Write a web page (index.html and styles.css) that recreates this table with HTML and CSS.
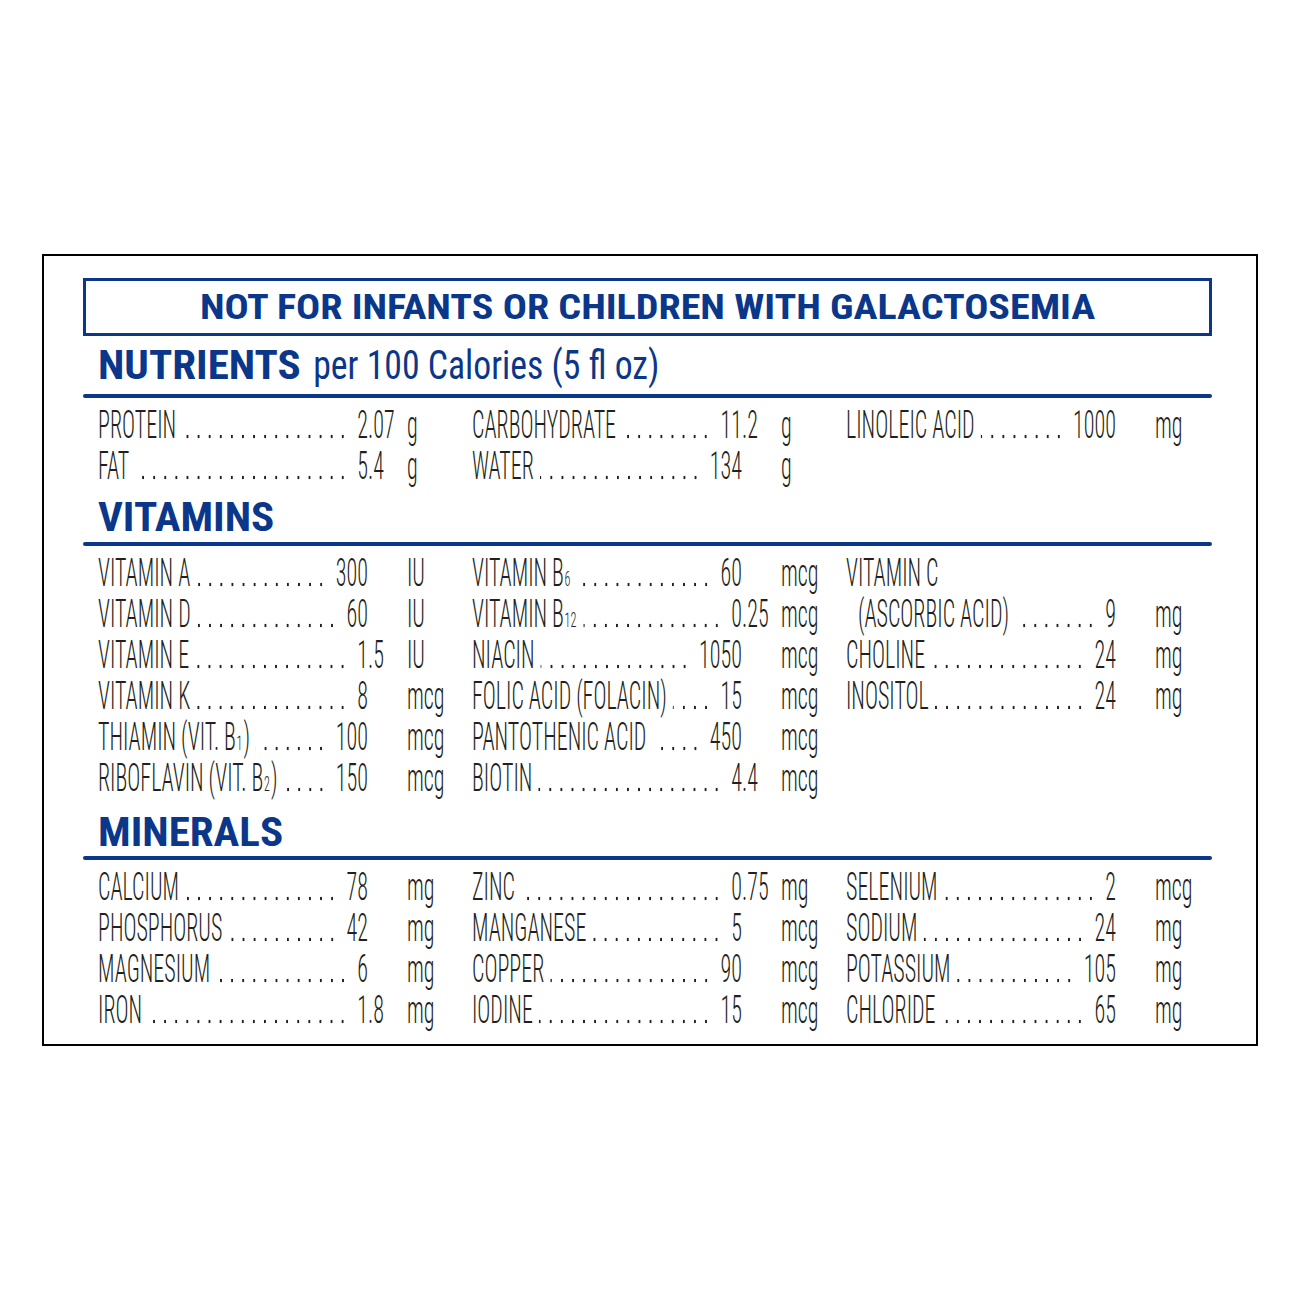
FILE: index.html
```html
<!DOCTYPE html>
<html lang="en">
<head>
<meta charset="utf-8">
<title>Nutrients</title>
<link rel="stylesheet" href="styles.css">
</head>
<body>
<div class="label">
  <div class="warning"><span class="warn-text">NOT FOR INFANTS OR CHILDREN WITH GALACTOSEMIA</span></div>

  <div class="heading h-nut"><span class="ht"><b>NUTRIENTS</b><span class="per">per 100 Calories (5 fl oz)</span></span></div>
  <div class="rule"></div>
  <div class="rows">
    <div class="grid">
      <div class="col">
        <div class="it"><span class="lead"><span class="nm">PROTEIN</span><span class="dt"></span><span class="iv">2</span></span><span class="fr">.07</span><span class="un">g</span></div>
        <div class="it"><span class="lead"><span class="nm">FAT</span><span class="dt"></span><span class="iv">5</span></span><span class="fr">.4</span><span class="un">g</span></div>
      </div>
      <div class="col">
        <div class="it"><span class="lead"><span class="nm">CARBOHYDRATE</span><span class="dt"></span><span class="iv">11</span></span><span class="fr">.2</span><span class="un">g</span></div>
        <div class="it"><span class="lead"><span class="nm">WATER</span><span class="dt"></span><span class="iv">134</span></span><span class="fr"></span><span class="un">g</span></div>
      </div>
      <div class="col">
        <div class="it"><span class="lead"><span class="nm">LINOLEIC ACID</span><span class="dt"></span><span class="iv">1000</span></span><span class="fr"></span><span class="un">mg</span></div>
      </div>
    </div>
  </div>

  <div class="heading h-vit"><span class="ht"><b>VITAMINS</b></span></div>
  <div class="rule"></div>
  <div class="rows">
    <div class="grid">
      <div class="col">
        <div class="it"><span class="lead"><span class="nm">VITAMIN A</span><span class="dt"></span><span class="iv">300</span></span><span class="fr"></span><span class="un">IU</span></div>
        <div class="it"><span class="lead"><span class="nm">VITAMIN D</span><span class="dt"></span><span class="iv">60</span></span><span class="fr"></span><span class="un">IU</span></div>
        <div class="it"><span class="lead"><span class="nm">VITAMIN E</span><span class="dt"></span><span class="iv">1</span></span><span class="fr">.5</span><span class="un">IU</span></div>
        <div class="it"><span class="lead"><span class="nm">VITAMIN K</span><span class="dt"></span><span class="iv">8</span></span><span class="fr"></span><span class="un">mcg</span></div>
        <div class="it"><span class="lead"><span class="nm">THIAMIN (VIT. B<sub class="sb">1</sub>)</span><span class="dt"></span><span class="iv">100</span></span><span class="fr"></span><span class="un">mcg</span></div>
        <div class="it"><span class="lead"><span class="nm">RIBOFLAVIN (VIT. B<sub class="sb">2</sub>)</span><span class="dt"></span><span class="iv">150</span></span><span class="fr"></span><span class="un">mcg</span></div>
      </div>
      <div class="col">
        <div class="it"><span class="lead"><span class="nm">VITAMIN B<sub class="sb">6</sub></span><span class="dt"></span><span class="iv">60</span></span><span class="fr"></span><span class="un">mcg</span></div>
        <div class="it"><span class="lead"><span class="nm">VITAMIN B<sub class="sb">12</sub></span><span class="dt"></span><span class="iv">0</span></span><span class="fr">.25</span><span class="un">mcg</span></div>
        <div class="it"><span class="lead"><span class="nm">NIACIN</span><span class="dt"></span><span class="iv">1050</span></span><span class="fr"></span><span class="un">mcg</span></div>
        <div class="it"><span class="lead"><span class="nm">FOLIC ACID (FOLACIN)</span><span class="dt"></span><span class="iv">15</span></span><span class="fr"></span><span class="un">mcg</span></div>
        <div class="it"><span class="lead"><span class="nm">PANTOTHENIC ACID</span><span class="dt"></span><span class="iv">450</span></span><span class="fr"></span><span class="un">mcg</span></div>
        <div class="it"><span class="lead"><span class="nm">BIOTIN</span><span class="dt"></span><span class="iv">4</span></span><span class="fr">.4</span><span class="un">mcg</span></div>
      </div>
      <div class="col">
        <div class="it"><span class="nm">VITAMIN C</span></div>
        <div class="it ind"><span class="lead"><span class="nm">(ASCORBIC ACID)</span><span class="dt"></span><span class="iv">9</span></span><span class="fr"></span><span class="un">mg</span></div>
        <div class="it"><span class="lead"><span class="nm">CHOLINE</span><span class="dt"></span><span class="iv">24</span></span><span class="fr"></span><span class="un">mg</span></div>
        <div class="it"><span class="lead"><span class="nm">INOSITOL</span><span class="dt"></span><span class="iv">24</span></span><span class="fr"></span><span class="un">mg</span></div>
      </div>
    </div>
  </div>

  <div class="heading h-min"><span class="ht"><b>MINERALS</b></span></div>
  <div class="rule"></div>
  <div class="rows">
    <div class="grid">
      <div class="col">
        <div class="it"><span class="lead"><span class="nm">CALCIUM</span><span class="dt"></span><span class="iv">78</span></span><span class="fr"></span><span class="un">mg</span></div>
        <div class="it"><span class="lead"><span class="nm">PHOSPHORUS</span><span class="dt"></span><span class="iv">42</span></span><span class="fr"></span><span class="un">mg</span></div>
        <div class="it"><span class="lead"><span class="nm">MAGNESIUM</span><span class="dt"></span><span class="iv">6</span></span><span class="fr"></span><span class="un">mg</span></div>
        <div class="it"><span class="lead"><span class="nm">IRON</span><span class="dt"></span><span class="iv">1</span></span><span class="fr">.8</span><span class="un">mg</span></div>
      </div>
      <div class="col">
        <div class="it"><span class="lead"><span class="nm">ZINC</span><span class="dt"></span><span class="iv">0</span></span><span class="fr">.75</span><span class="un">mg</span></div>
        <div class="it"><span class="lead"><span class="nm">MANGANESE</span><span class="dt"></span><span class="iv">5</span></span><span class="fr"></span><span class="un">mcg</span></div>
        <div class="it"><span class="lead"><span class="nm">COPPER</span><span class="dt"></span><span class="iv">90</span></span><span class="fr"></span><span class="un">mcg</span></div>
        <div class="it"><span class="lead"><span class="nm">IODINE</span><span class="dt"></span><span class="iv">15</span></span><span class="fr"></span><span class="un">mcg</span></div>
      </div>
      <div class="col">
        <div class="it"><span class="lead"><span class="nm">SELENIUM</span><span class="dt"></span><span class="iv">2</span></span><span class="fr"></span><span class="un">mcg</span></div>
        <div class="it"><span class="lead"><span class="nm">SODIUM</span><span class="dt"></span><span class="iv">24</span></span><span class="fr"></span><span class="un">mg</span></div>
        <div class="it"><span class="lead"><span class="nm">POTASSIUM</span><span class="dt"></span><span class="iv">105</span></span><span class="fr"></span><span class="un">mg</span></div>
        <div class="it"><span class="lead"><span class="nm">CHLORIDE</span><span class="dt"></span><span class="iv">65</span></span><span class="fr"></span><span class="un">mg</span></div>
      </div>
    </div>
  </div>
</div>
</body>
</html>
```
FILE: styles.css
```css
html, body {
  margin: 0;
  padding: 0;
  background: #fff;
}

.label {
  --blue: #0b378a;
  --ink: #231f20;
  box-sizing: border-box;
  width: 1216px;
  height: 792px;
  margin: 254px 0 0 42px;
  border: 2px solid #000;
  padding: 22px 44px 0 39px;
  overflow: hidden;
  font-family: Roboto, "Roboto Condensed", "Liberation Sans", sans-serif;
}

/* warning box */
.warning {
  box-sizing: border-box;
  height: 58px;
  border: 3px solid var(--blue);
  display: flex;
  align-items: center;
  justify-content: center;
}
.warn-text {
  display: inline-block;
  color: var(--blue);
  font-weight: 700;
  font-stretch: 75%;
  font-size: 35px;
  line-height: 1;
  transform: scaleX(1.146);
  transform-origin: center;
  white-space: nowrap;
}

/* section headings */
.heading {
  box-sizing: border-box;
  display: flex;
  align-items: flex-end;
  padding-left: 15px;
  color: var(--blue);
}
.h-nut { height: 58px; padding-bottom: 8px; }
.h-vit { height: 55px; padding-bottom: 4px; }
.h-min { height: 57px; padding-bottom: 3px; }

.ht {
  display: inline-block;
  font-size: 41px;
  line-height: 1;
  font-stretch: 75%;
  white-space: nowrap;
  transform: scaleX(1.05);
  transform-origin: left bottom;
}
.ht b { font-weight: 700; }
.per {
  display: inline-block;
  margin-left: 12px;
  font-weight: 400;
  font-size: 40px;
  transform: scaleX(0.85);
  transform-origin: left bottom;
}

.rule {
  height: 4px;
  background: var(--blue);
  border-radius: 2px;
}

/* nutrient rows, drawn wide and compressed horizontally */
.rows {
  --sx: 0.58;
  width: calc(1129px / var(--sx));
  padding-top: 7px;
  transform: scaleX(var(--sx));
  transform-origin: 0 0;
  color: var(--ink);
  font-weight: 300;
  font-stretch: 75%;
  font-size: 38px;
}
.grid {
  display: grid;
  grid-template-columns: repeat(3, calc(374px / var(--sx)));
  padding-left: calc(15px / var(--sx));
}
.it {
  display: flex;
  height: 41px;
  line-height: 41px;
  white-space: nowrap;
}
.it.ind { padding-left: calc(12px / var(--sx)); }
.lead {
  display: flex;
  flex: 0 0 auto;
  width: calc(270px / var(--sx));
}
.it.ind .lead { width: calc(258px / var(--sx)); }
.nm { flex: 0 0 auto; }
.dt {
  flex: 1 1 auto;
  margin: 0 calc(9px / var(--sx)) 0 calc(6px / var(--sx));
  background-image: radial-gradient(circle at center, var(--ink) 1.5px, transparent 2.2px);
  background-size: calc(11.1px / var(--sx)) 5px;
  background-repeat: repeat-x;
  background-position: right 0 top 29px;
}
.iv { flex: 0 0 auto; }
.fr {
  flex: 0 0 auto;
  width: calc(39px / var(--sx));
}
.un { flex: 0 0 auto; }
.sb {
  font-size: 0.55em;
  line-height: 0;
  vertical-align: baseline;
  margin: 0 2px 0 1px;
}
```
